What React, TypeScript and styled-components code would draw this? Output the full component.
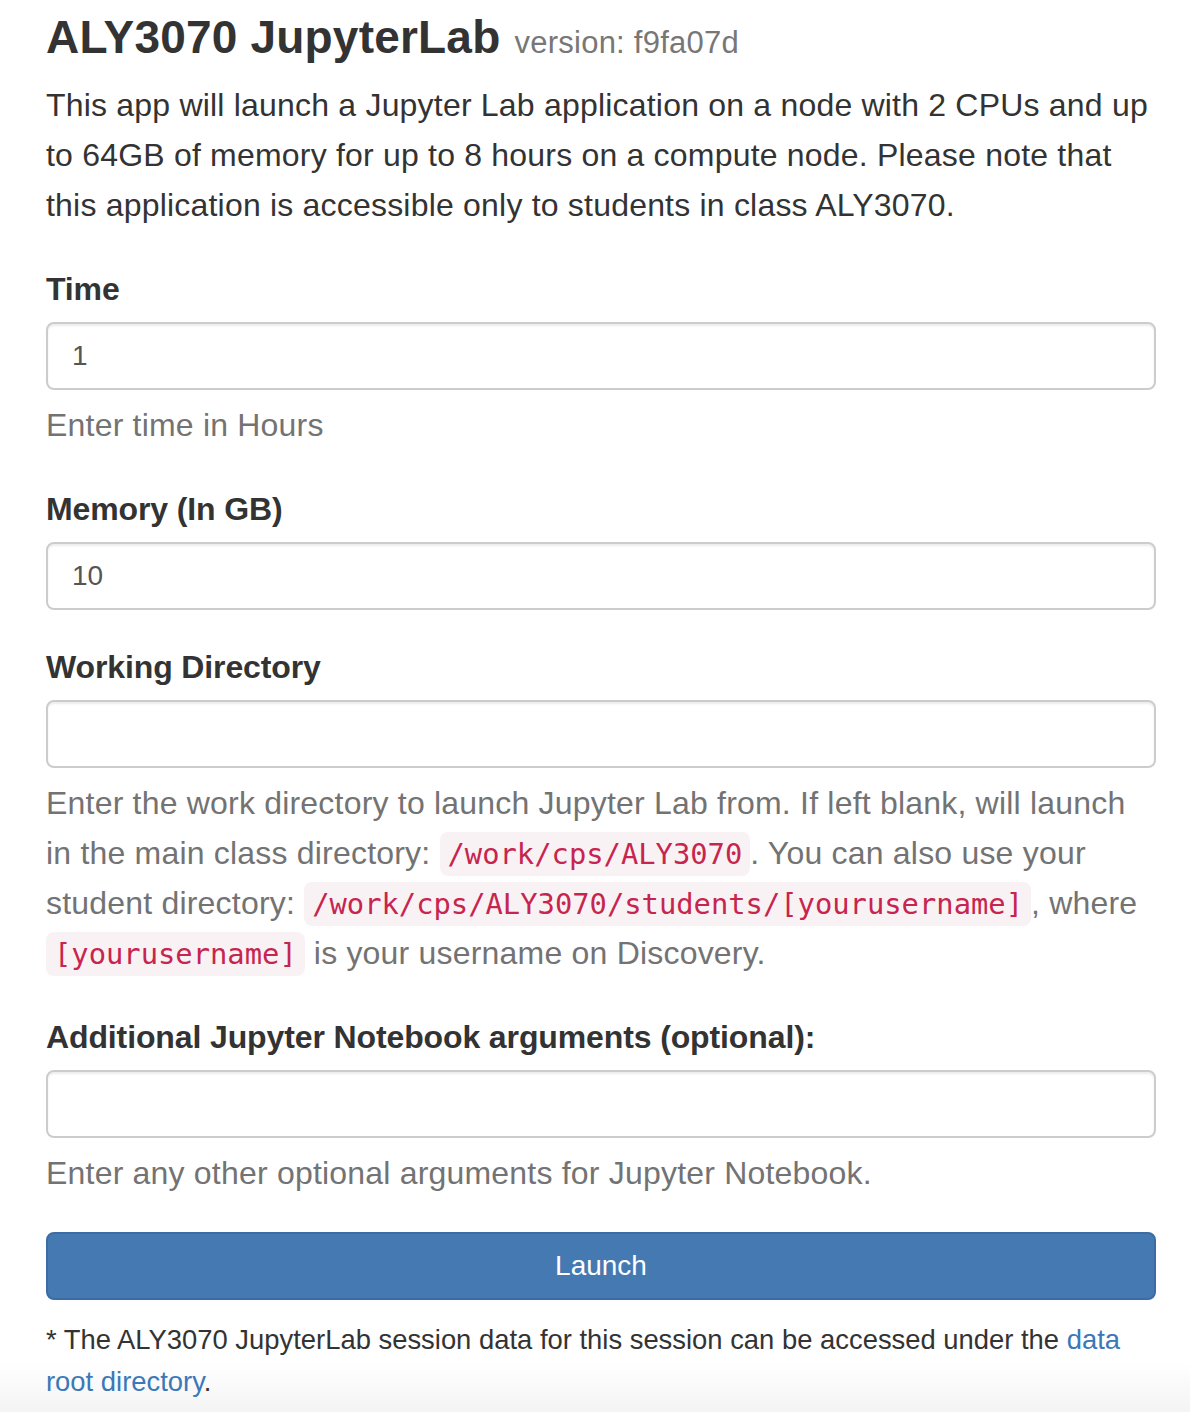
import React from "react";
import styled, { createGlobalStyle } from "styled-components";

const GlobalStyle = createGlobalStyle`
  html, body {
    margin: 0;
    padding: 0;
  }
  html {
    min-height: 1412px;
    background: linear-gradient(to bottom, #ffffff 0px, #ffffff 1362px, #f4f4f4 1412px);
  }
  body {
    font-family: "Liberation Sans", Arial, Helvetica, sans-serif;
    color: #333333;
    background: transparent;
  }
  * { box-sizing: border-box; }
`;

const Page = styled.main`
  width: 1110px;
  margin-left: 46px;
  padding-top: 9px;
  padding-bottom: 11px;
`;

const Title = styled.h1`
  margin: 0;
  font-size: 46px;
  line-height: 56px;
  font-weight: 700;
  letter-spacing: 0.2px;
  color: #333333;
  display: flex;
  align-items: baseline;
  gap: 14px;
`;

const Version = styled.small`
  font-size: 31px;
  font-weight: 400;
  letter-spacing: 0.25px;
  color: #777777;
`;

const Intro = styled.p`
  margin: 9px 0 0;
  font-size: 32px;
  line-height: 50px;
  letter-spacing: 0.2px;
  color: #333333;
`;

const Form = styled.form`
  margin-top: 34px;
  display: flex;
  flex-direction: column;
`;

const Group = styled.div`
  display: flex;
  flex-direction: column;
  margin-bottom: 32px;
`;

const Label = styled.label`
  font-size: 32px;
  line-height: 50px;
  font-weight: 700;
  letter-spacing: -0.12px;
  margin-bottom: 8px;
`;

const Input = styled.input`
  width: 100%;
  height: 68px;
  padding: 12px 24px;
  font-family: "Liberation Sans", Arial, Helvetica, sans-serif;
  font-size: 28px;
  color: #555555;
  background: #ffffff;
  border: 2px solid #cccccc;
  border-radius: 8px;
  box-shadow: inset 0 2px 2px rgba(0, 0, 0, 0.075);
  outline: none;
`;

const Help = styled.p`
  margin: 10px 0 2px;
  font-size: 32px;
  line-height: 50px;
  letter-spacing: 0.2px;
  color: #737373;
`;

const Code = styled.code`
  font-family: "DejaVu Sans Mono", Menlo, monospace;
  font-size: 28.8px;
  line-height: 1;
  letter-spacing: 0;
  padding: 5px 8px;
  color: #c7254e;
  background: #f9f2f4;
  border-radius: 8px;
`;

const LaunchButton = styled.button`
  width: 100%;
  height: 68px;
  font-family: "Liberation Sans", Arial, Helvetica, sans-serif;
  font-size: 28px;
  color: #ffffff;
  background: #4579b2;
  border: 2px solid #3b6ca3;
  border-radius: 8px;
  cursor: pointer;
`;

const Footnote = styled.p`
  margin: 19px 0 0;
  font-size: 27.4px;
  line-height: 42px;
  color: #333333;
`;

const Link = styled.a`
  color: #3b78b8;
  text-decoration: none;
`;

export default function App() {
  return (
    <>
      <GlobalStyle />
      <Page>
        <Title>
          ALY3070 JupyterLab <Version>version: f9fa07d</Version>
        </Title>
        <Intro>
          This app will launch a Jupyter Lab application on a node with 2 CPUs
          and up to 64GB of memory for up to 8 hours on a compute node. Please
          note that this application is accessible only to students in class
          ALY3070.
        </Intro>
        <Form onSubmit={(e) => e.preventDefault()}>
          <Group>
            <Label htmlFor="time">Time</Label>
            <Input id="time" type="text" defaultValue="1" />
            <Help>Enter time in Hours</Help>
          </Group>
          <Group>
            <Label htmlFor="memory">Memory (In GB)</Label>
            <Input id="memory" type="text" defaultValue="10" />
          </Group>
          <Group>
            <Label htmlFor="workdir">Working Directory</Label>
            <Input id="workdir" type="text" defaultValue="" />
            <Help>
              Enter the work directory to launch Jupyter Lab from. If left
              blank, will launch in the main class directory:{" "}
              <Code>/work/cps/ALY3070</Code>. You can also use your student
              directory: <Code>/work/cps/ALY3070/students/[yourusername]</Code>,
              where <Code>[yourusername]</Code> is your username on Discovery.
            </Help>
          </Group>
          <Group>
            <Label htmlFor="args">
              Additional Jupyter Notebook arguments (optional):
            </Label>
            <Input id="args" type="text" defaultValue="" />
            <Help>Enter any other optional arguments for Jupyter Notebook.</Help>
          </Group>
          <LaunchButton type="submit">Launch</LaunchButton>
        </Form>
        <Footnote>
          * The ALY3070 JupyterLab session data for this session can be
          accessed under the <Link href="#">data root directory</Link>.
        </Footnote>
      </Page>
    </>
  );
}
